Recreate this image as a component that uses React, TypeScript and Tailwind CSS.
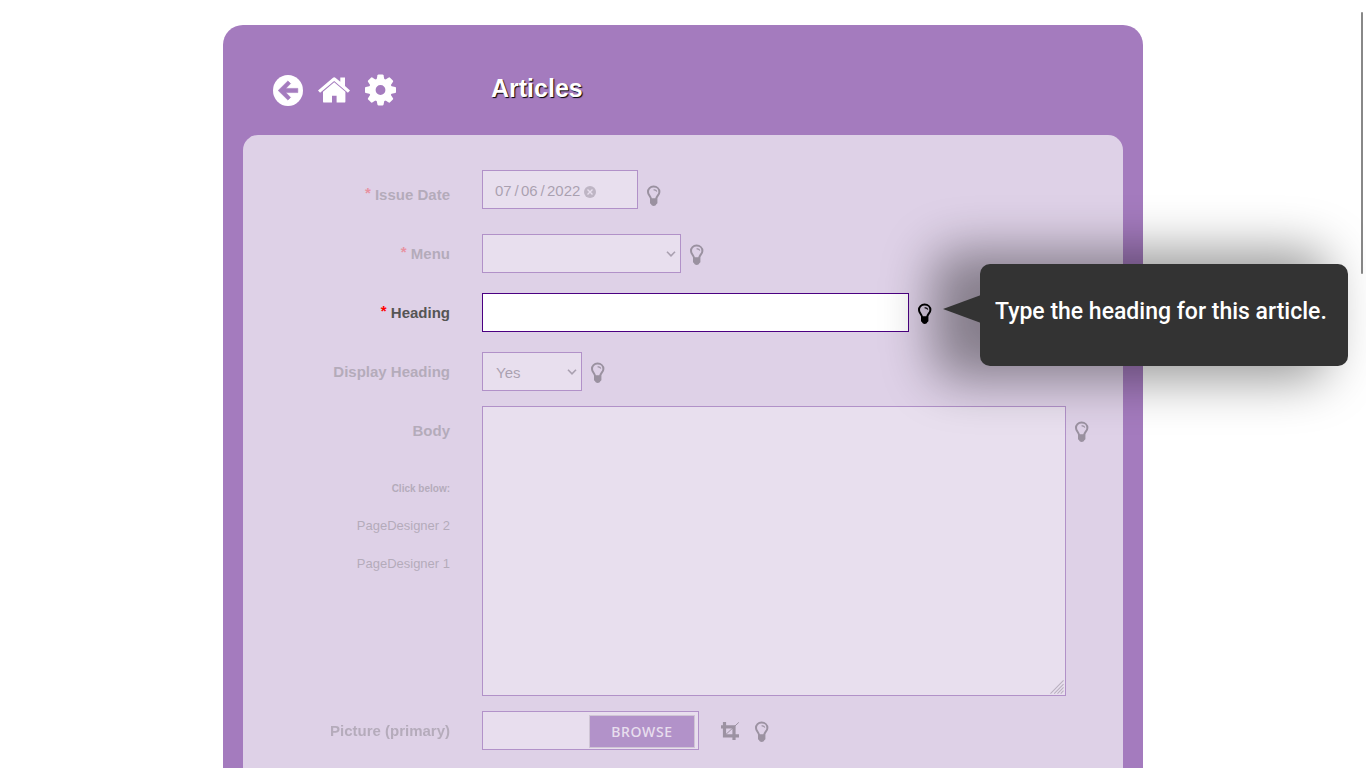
import type { ReactNode } from "react";

function BulbIcon() {
  return (
    <svg viewBox="0 0 14 21" className="h-[21px] w-[14px]" aria-hidden="true">
      <path
        d="M6.6 1.6C3.2 1.6 1 4 1 6.9C1 9.9 3.9 11.3 4.2 14.4H9C9.3 11.3 12.4 9.9 12.4 6.9C12.4 4 10 1.6 6.6 1.6Z"
        fill="none"
        stroke="#000"
        strokeWidth="2"
      />
      <path d="M6.6 4.9C8.2 4.6 9.2 5.3 9.8 6.5" fill="none" stroke="#000" strokeWidth="1.2" />
      <path d="M3 13.6H10.4V18.2L9.3 19.3C9 20.3 8 20.9 6.7 20.9S4.4 20.3 4.1 19.3L3 18.2Z" fill="#000" />
    </svg>
  );
}

function CropIcon() {
  return (
    <svg viewBox="0 0 18 18" className="size-[18px]" aria-hidden="true">
      <path d="M3.5 0V13.8H18M0 4.8H13V18" fill="none" stroke="#000" strokeWidth="3.2" />
      <path d="M5 12.3L17.8 .4" stroke="#000" strokeWidth="1" fill="none" />
    </svg>
  );
}

function BackIcon() {
  return (
    <svg viewBox="0 0 30 31" className="h-[31px] w-[30px]" aria-hidden="true">
      <ellipse cx="15" cy="15.5" rx="15" ry="15.5" fill="#fff" />
      <path
        d="M5.2 15.5L14.9 5.9L17.6 8.6L12.9 13.4H24.8V17.6H12.9L17.6 22.4L14.9 25.1Z"
        fill="#a47bbe"
        stroke="#a47bbe"
        strokeWidth=".6"
        strokeLinejoin="round"
      />
    </svg>
  );
}

function HomeIcon() {
  return (
    <svg viewBox="0 0 32 26" className="h-[26px] w-[32px]" fill="#fff" aria-hidden="true">
      <path d="M5 14.8L16.2 5.2L27.4 14.8V24.4Q27.4 25.6 26.2 25.6H18.6V18.7H14V25.6H6.2Q5 25.6 5 24.4Z" />
      <path d="M0 13.4L14.7 .9Q16.2 -.2 17.7 .9L22.3 4.8V.6H27V8.9L32 13.4L29.9 15.8L16.2 4L2.1 15.8Z" />
    </svg>
  );
}

const TEETH = [0, 45, 90, 135, 180, 225, 270, 315];

function GearIcon() {
  return (
    <svg viewBox="-15.5 -16 32 32" className="size-8" aria-hidden="true">
      {TEETH.map((angle) => (
        <path
          key={angle}
          transform={`rotate(${angle})`}
          d="M-4 -10L-3 -14.7Q-2.8 -15.5 -2 -15.5H2Q2.8 -15.5 3 -14.7L4 -10Z"
          fill="#fff"
        />
      ))}
      <circle r="8.2" fill="none" stroke="#fff" strokeWidth="6.6" />
    </svg>
  );
}

function Chevron() {
  return (
    <svg
      viewBox="0 0 10 6"
      className="pointer-events-none absolute right-[5px] top-[17px] h-[6px] w-[10px]"
      fill="none"
      stroke="#333"
      strokeWidth="1.6"
      aria-hidden="true"
    >
      <path d="M1 .8L5 4.8L9 .8" />
    </svg>
  );
}

function HintButton({ name }: { name: string }) {
  return (
    <button type="button" aria-label={`Help: ${name}`} className="mt-[10px] block shrink-0">
      <BulbIcon />
    </button>
  );
}

type RowProps = {
  id: string;
  label: string;
  required?: boolean;
  active?: boolean;
  raised?: boolean;
  className?: string;
  below?: ReactNode;
  aside?: ReactNode;
  children: ReactNode;
};

function Row({ id, label, required, active, raised, className = "", below, aside, children }: RowProps) {
  return (
    <div className={`grid grid-cols-[207px_1fr] gap-8 ${active ? "relative z-10" : "opacity-30"} ${className}`}>
      <div className={`text-right ${raised ? "pt-[5px]" : ""}`}>
        <label htmlFor={id} className="block text-[15px] font-bold leading-[39px] text-[#555]">
          {required && <span className="relative -top-[2px] text-[#f00]">* </span>}
          {label}
        </label>
        {below}
      </div>
      <div className="flex items-start gap-[9px]">
        {children}
        <div className={`relative flex gap-4 ${raised ? "pt-[5px]" : ""}`}>
          {aside}
          <HintButton name={label} />
          {active && <Hint />}
        </div>
      </div>
    </div>
  );
}

function Hint() {
  return (
    <div
      role="tooltip"
      className="absolute left-[62px] -top-[29px] flex h-[102px] w-[368px] rounded-[10px] bg-[#333] px-[15px] pt-[34px] shadow-[-34px_0_50px_14px_rgba(0,0,0,0.4)]"
    >
      <svg viewBox="0 0 38 28" className="absolute -left-[37px] top-[31px] h-7 w-[38px]" aria-hidden="true">
        <path d="M0 14L38 0V28Z" fill="#333" />
      </svg>
      <p className="whitespace-nowrap font-['Roboto',sans-serif] text-[23px] font-medium leading-7 text-white">
        Type the heading for this article.
      </p>
    </div>
  );
}

export default function App() {
  return (
    <div className="relative flex min-h-screen flex-col overflow-hidden bg-white pt-[25px] font-['Liberation_Sans',Arial,sans-serif]">
      <main className="mx-auto flex w-full max-w-[920px] flex-1 flex-col rounded-t-[20px] bg-[#a47bbe] px-5">
        <header className="flex h-[110px] items-center pl-[30px] pt-[20px]">
          <nav className="flex w-[218px] items-center gap-[15px]">
            <a href="#back" aria-label="Back">
              <BackIcon />
            </a>
            <a href="#home" aria-label="Home">
              <HomeIcon />
            </a>
            <a href="#settings" aria-label="Settings">
              <GearIcon />
            </a>
          </nav>
          <h1 className="pb-[2px] text-[25px] font-bold text-white [text-shadow:1px_1px_1px_#000]">Articles</h1>
        </header>

        <form className="flex flex-1 flex-col gap-[15px] rounded-t-[15px] bg-[#ded1e7] pt-[35px]">
          <Row id="issue-month" label="Issue Date" required raised className="pb-[5px]">
            <div className="flex h-[39px] w-[156px] items-center border border-[#4b0082] bg-white pl-3 pt-1 text-[15px] text-[#333]">
              <input id="issue-month" className="w-[17px]" defaultValue="07" />
              <span className="w-[9px] text-center">/</span>
              <input aria-label="Day" className="w-[17px]" defaultValue="06" />
              <span className="w-[9px] text-center">/</span>
              <input aria-label="Year" className="w-[34px]" defaultValue="2022" />
              <button type="button" aria-label="Clear date" className="ml-[3px]">
                <svg viewBox="0 0 12 12" className="size-3" aria-hidden="true">
                  <circle cx="6" cy="6" r="6" fill="#777" />
                  <path d="M3.5 3.5L8.5 8.5M8.5 3.5L3.5 8.5" stroke="#fff" strokeWidth="1.4" />
                </svg>
              </button>
            </div>
          </Row>

          <Row id="menu" label="Menu" required className="pb-[5px]">
            <div className="relative w-[199px]">
              <select
                id="menu"
                className="h-[39px] w-full appearance-none border border-[#4b0082] bg-white pl-[13px] text-[15px] text-[#333]"
              >
                <option></option>
              </select>
              <Chevron />
            </div>
          </Row>

          <Row id="heading" label="Heading" required active className="pb-[5px]">
            <input id="heading" className="h-[39px] w-[427px] border border-[#4b0082] bg-white px-3 text-[15px]" />
          </Row>

          <Row id="display-heading" label="Display Heading">
            <div className="relative w-[100px]">
              <select
                id="display-heading"
                className="h-[39px] w-full appearance-none border border-[#4b0082] bg-white pl-[13px] pt-1 text-[15px] text-[#333]"
              >
                <option>Yes</option>
                <option>No</option>
              </select>
              <Chevron />
            </div>
          </Row>

          <Row
            id="body"
            label="Body"
            raised
            below={
              <div className="flex flex-col items-end pt-8 text-[13px] text-[#555]">
                <strong className="text-[10px] leading-[14px]">Click below:</strong>
                <a href="#designer-2" className="mt-[22px] leading-4">
                  PageDesigner 2
                </a>
                <a href="#designer-1" className="mt-[22px] leading-4">
                  PageDesigner 1
                </a>
              </div>
            }
          >
            <div className="relative w-[584px]">
              <textarea
                id="body"
                className="block h-[290px] w-full resize-none border border-[#4b0082] bg-white p-3 text-[15px]"
              />
              <svg
                viewBox="0 0 15 15"
                className="pointer-events-none absolute bottom-[2px] right-[2px] size-[14px]"
                stroke="#666"
                strokeWidth="1.1"
                aria-hidden="true"
              >
                <path d="M.5 14.5L14.5 .5M4.5 14.5L14.5 4.5M8 14.5L14.5 8M11.5 14.5L14.5 11.5" />
              </svg>
            </div>
          </Row>

          <Row
            id="picture"
            label="Picture (primary)"
            aside={
              <button type="button" aria-label="Crop picture" className="ml-[13px] mt-[11px] h-[18px]">
                <CropIcon />
              </button>
            }
          >
            <div className="flex h-[39px] w-[217px] items-center border border-[#4b0082] bg-white pr-[3px] pt-[2px]">
              <input id="picture" readOnly className="min-w-0 flex-1 px-3 text-[15px]" />
              <button
                type="button"
                className="h-[33px] w-[106px] border border-[#aaa] bg-[#4b0082] font-['Noto_Sans',sans-serif] text-[14px] font-medium tracking-wider text-white"
              >
                BROWSE
              </button>
            </div>
          </Row>
        </form>
      </main>
      <div className="absolute right-[3px] top-3 h-[262px] w-[2px] rounded-full bg-[#888]" />
    </div>
  );
}
